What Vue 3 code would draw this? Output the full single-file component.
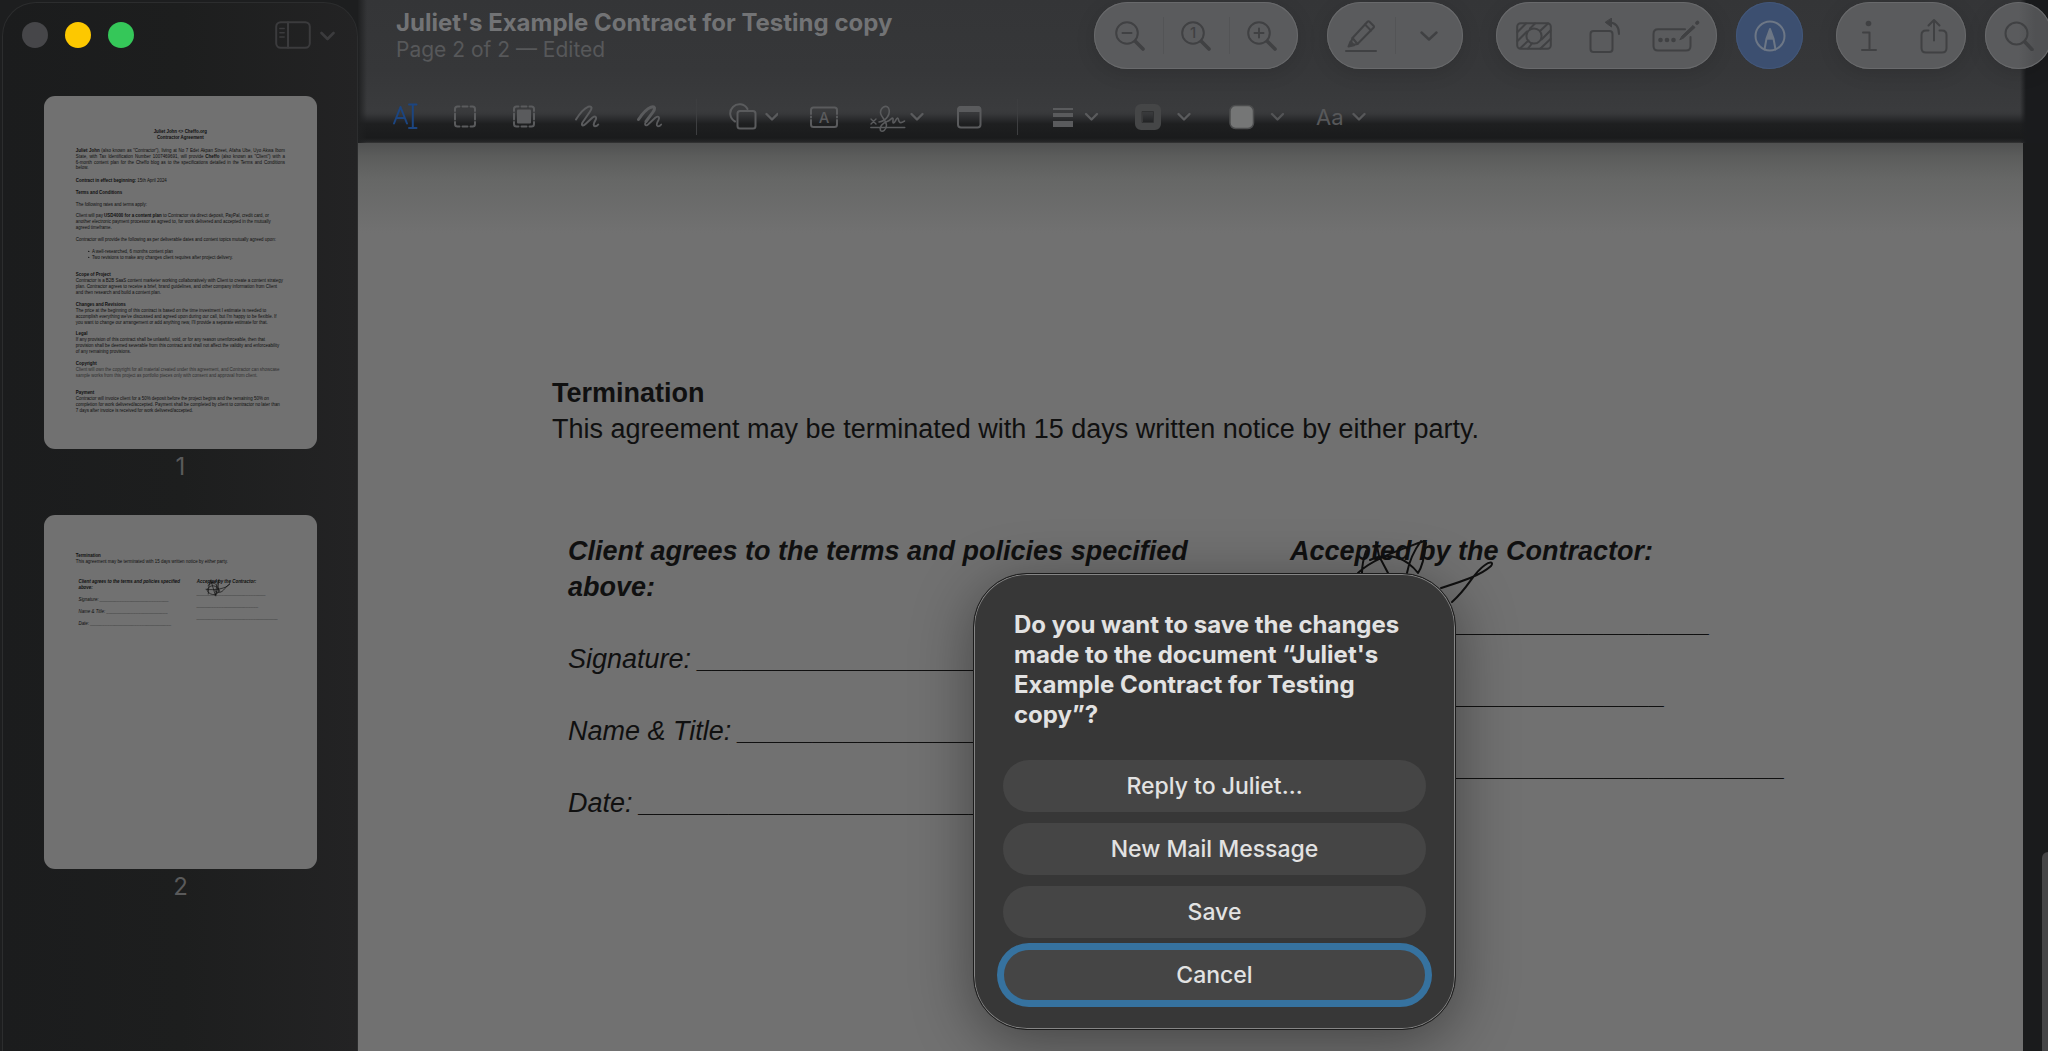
<script setup>
import { ref } from 'vue';

const docName = "Juliet's Example Contract for Testing copy";
const actions = ['Reply to Juliet…', 'New Mail Message', 'Save', 'Cancel'];
const focused = ref('Cancel');

function blank(count) {
  return '_'.repeat(count);
}
</script>

<template>
  <div class="window">
    <aside class="sidebar">
      <div class="sidebar-top">
        <div class="lights">
          <button class="light close" aria-label="Close"></button>
          <button class="light minimize" aria-label="Minimize"></button>
          <button class="light zoom" aria-label="Zoom"></button>
        </div>
        <button class="icon-button" aria-label="Sidebar view">
          <svg width="60" height="28" viewBox="0 0 60 28" class="line">
            <rect x="1.2" y="1.2" width="33.6" height="25.6" rx="4.5" />
            <path d="M13 1.2v25.6" />
            <path d="M4.800 7.500h4.400M4.800 11.800h4.400M4.800 16h4.400" stroke-width="1.400" />
            <path d="M46.500 12l6 6 6-6" stroke-width="2.600" />
          </svg>
        </button>
      </div>

      <figure class="thumb">
        <svg class="thumb-page" viewBox="0 0 1665 2155">
          <foreignObject width="1665" height="2155">
            <div class="sheet first">
              <h1>Juliet John &lt;&gt; Cheffo.org<br />Contractor Agreement</h1>
              <p class="justify">
                <b>Juliet John</b> (also known as "Contractor"), living at No 7 Edet Akpan Street, Afaha Ube, Uyo Akwa Ibom<br />
                State, with Tax Identification Number 1007469691, will provide <b>Cheffo</b> (also known as "Client") with a<br />
                6-month content plan for the Cheffo blog as to the specifications detailed in the Terms and Conditions<br />
                below.
              </p>
              <p><b>Contract in effect beginning:</b> 15th April 2024</p>
              <p><b>Terms and Conditions</b></p>
              <p>The following rates and terms apply:</p>
              <p>
                Client will pay <b>USD4000 for a content plan</b> to Contractor via direct deposit, PayPal, credit card, or<br />
                another electronic payment processor as agreed to, for work delivered and accepted in the mutually<br />
                agreed timeframe.
              </p>
              <p>Contractor will provide the following as per deliverable dates and content topics mutually agreed upon:</p>
              <ul>
                <li>A well-researched, 6 months content plan</li>
                <li>Two revisions to make any changes client requires after project delivery.</li>
              </ul>
              <p>
                <b>Scope of Project</b><br />
                Contractor is a B2B SaaS content marketer working collaboratively with Client to create a content strategy<br />
                plan. Contractor agrees to receive a brief, brand guidelines, and other company information from Client<br />
                and then research and build a content plan.
              </p>
              <p>
                <b>Changes and Revisions</b><br />
                The price at the beginning of this contract is based on the time investment I estimate is needed to<br />
                accomplish everything we've discussed and agreed upon during our call, but I'm happy to be flexible. If<br />
                you want to change our arrangement or add anything new, I'll provide a separate estimate for that.
              </p>
              <p>
                <b>Legal</b><br />
                If any provision of this contract shall be unlawful, void, or for any reason unenforceable, then that<br />
                provision shall be deemed severable from this contract and shall not affect the validity and enforceability<br />
                of any remaining provisions.
              </p>
              <p class="pale">
                <b>Copyright</b><br />
                Client will own the copyright for all material created under this agreement, and Contractor can showcase<br />
                sample works from this project as portfolio pieces only with consent and approval from client.
              </p>
              <p class="last">
                <b>Payment</b><br />
                Contractor will invoice client for a 50% deposit before the project begins and the remaining 50% on<br />
                completion for work delivered/accepted. Payment shall be completed by client to contractor no later than<br />
                7 days after invoice is received for work delivered/accepted.
              </p>
            </div>
          </foreignObject>
        </svg>
        <figcaption>1</figcaption>
      </figure>

      <figure class="thumb">
        <svg class="thumb-page" viewBox="0 0 1665 2155">
          <foreignObject width="1665" height="2155">
            <div class="sheet">
              <h2>Termination</h2>
              <p>This agreement may be terminated with 15 days written notice by either party.</p>
              <div class="signoff">
                <div class="party">
                  <h3>Client agrees to the terms and policies specified above:</h3>
                  <p>Signature: {{ blank(28) }}</p>
                  <p>Name &amp; Title: {{ blank(25) }}</p>
                  <p>Date: {{ blank(33) }}</p>
                </div>
                <div class="party">
                  <h3>Accepted by the Contractor:</h3>
                  <p>{{ blank(28) }}</p>
                  <p>{{ blank(25) }}</p>
                  <p>{{ blank(33) }}</p>
                  <svg class="scribble heavy" viewBox="0 0 160 110">
                    <path d="M18 43C34 28 52 22 82 13M20 95C22 50 24 34 36 12L62 100M38 26c28 2 50 22 44 56C70 110 20 100 12 70C30 30 80 40 90 80M66 108C68 50 72 30 84 12c-2 40-10 70-22 92M6 66C60 74 130 62 152 34C150 28 140 40 112 72C92 92 70 88 60 74" />
                  </svg>
                </div>
              </div>
            </div>
          </foreignObject>
        </svg>
        <figcaption>2</figcaption>
      </figure>
    </aside>

    <main class="viewer">
      <header class="toolbar">
        <div class="toolbar-top">
          <div class="titles">
            <h1>{{ docName }}</h1>
            <p>Page 2 of 2 — Edited</p>
          </div>

          <div class="pill zooms">
            <button aria-label="Zoom out">
              <svg width="30" height="30" viewBox="0 0 30 30" class="line">
                <circle cx="12" cy="12" r="10.800" />
                <path d="M7.500 12h9" />
                <path d="M20.500 20.500l7.500 7.500" stroke-width="3.600" />
              </svg>
            </button>
            <button aria-label="Actual size">
              <svg width="30" height="30" viewBox="0 0 30 30" class="line">
                <circle cx="12" cy="12" r="10.800" />
                <text x="12" y="17" text-anchor="middle" class="glyph">1</text>
                <path d="M20.500 20.500l7.500 7.500" stroke-width="3.600" />
              </svg>
            </button>
            <button aria-label="Zoom in">
              <svg width="30" height="30" viewBox="0 0 30 30" class="line">
                <circle cx="12" cy="12" r="10.800" />
                <path d="M7.500 12h9M12 7.500v9" />
                <path d="M20.500 20.500l7.500 7.500" stroke-width="3.600" />
              </svg>
            </button>
          </div>

          <div class="pill highlight">
            <button aria-label="Highlight">
              <svg width="32" height="32" viewBox="0 0 32 32" class="line">
                <path d="M1 31h30" />
                <path d="M5 25.500l2.500-7.500L22.500 1.800q1-1 2 0l4 4q1 1 0 2L12.500 24z" />
                <path d="M20 4.500l6 6M7.500 18l5 6" />
                <path d="M3.500 26.500l2-5 3.500 3.800z" fill="currentColor" />
              </svg>
            </button>
            <button aria-label="Highlight colour">
              <svg width="18" height="10" viewBox="0 0 18 10" class="line">
                <path d="M1.500 1.500l7.500 7 7.500-7" stroke-width="2.400" />
              </svg>
            </button>
          </div>

          <div class="pill edits">
            <button aria-label="Image background">
              <svg width="36" height="28" viewBox="0 0 36 28" class="line">
                <rect x="1.200" y="1.200" width="33.600" height="25.600" rx="3.500" />
                <circle cx="18" cy="14" r="7.600" />
                <path d="M1.500 10L10 1.500M1.500 19L11 9.500M4.500 26l8-7.500M14 6.500L19 1.500M12 26.500l4-5M24 9l8-7.500M25.500 17.500L34.500 8.500M24.500 26.500l10-9.500" />
              </svg>
            </button>
            <button aria-label="Rotate left">
              <svg width="32" height="36" viewBox="0 0 32 36" class="line">
                <rect x="1.500" y="13" width="22" height="21" rx="3" />
                <path d="M20 4.500c6 0 10 3.500 10 11.500" />
                <path d="M22.500.5v8.500L16.500 4.500z" fill="currentColor" stroke-width="1" />
              </svg>
            </button>
            <button aria-label="Fill form">
              <svg width="48" height="32" viewBox="0 0 48 32" class="line">
                <path d="M33 9.200H6Q1.500 9.200 1.500 14V26Q1.500 30.500 6 30.500H34Q38.500 30.500 38.500 26V17" />
                <g fill="currentColor" stroke="none">
                  <circle cx="8.500" cy="20" r="2.300" />
                  <circle cx="15" cy="20" r="2.300" />
                  <circle cx="21.500" cy="20" r="2.300" />
                </g>
                <path d="M28 19.500L30 16 41 5.500 43 7.500 31.500 18z" fill="currentColor" stroke-width="1" />
                <path d="M45 3l.5-.5" stroke-width="3.600" />
              </svg>
            </button>
          </div>

          <div class="pill markup">
            <button aria-label="Markup">
              <svg width="32" height="32" viewBox="0 0 32 32" class="line">
                <circle cx="16" cy="16" r="14.500" />
                <path d="M10.500 29.500l2-11L16 9l3.500 9.500 2 11M12.500 18.500h7" stroke-width="2" />
                <path d="M13 18.500L16 9l3 9.500z" fill="currentColor" stroke-width="1" />
              </svg>
            </button>
          </div>

          <div class="pill share">
            <button aria-label="Info">
              <svg width="18" height="32" viewBox="0 0 18 32" class="line">
                <circle cx="8.500" cy="3.500" r="2.800" fill="currentColor" stroke="none" />
                <path d="M3 12.500h6.500v17.500M2 30h14" />
              </svg>
            </button>
            <button aria-label="Share">
              <svg width="28" height="36" viewBox="0 0 28 36" class="line">
                <path d="M8.500 12.500H6Q1.500 12.500 1.500 17V30Q1.500 34.500 6 34.500H22Q26.500 34.500 26.500 30V17Q26.500 12.500 22 12.500H19.500" />
                <path d="M14 22.500V2M8.500 7.500L14 2l5.500 5.500" />
              </svg>
            </button>
          </div>

          <div class="pill search">
            <button aria-label="Search">
              <svg width="30" height="30" viewBox="0 0 30 30" class="line">
                <circle cx="12.500" cy="12.500" r="11" />
                <path d="M21 21l7 7.500" stroke-width="3.600" />
              </svg>
            </button>
          </div>
        </div>

        <div class="tools">
          <button class="active" aria-label="Text selection">
            <svg width="29" height="36" viewBox="0 0 29 36" class="line">
              <path d="M1 24.500L7.500 8 14 24.500M3.500 19h8" />
              <path d="M16 5.500h7.500M19.800 5.500v23.500M16 29h7.500" />
            </svg>
          </button>
          <button aria-label="Rectangular selection">
            <svg width="27" height="36" viewBox="0 0 27 36" class="line">
              <path d="M1 12V10Q1 7.500 3.500 7.500H5.500M8.500 7.500h5M16.500 7.500h2Q21 7.500 21 10v2M21 14.500v6M21 23v2Q21 27.500 18.500 27.500h-2M13.500 27.500h-5M5.500 27.500h-2Q1 27.500 1 25v-2M1 20.500v-6" />
            </svg>
          </button>
          <button aria-label="Invert selection">
            <svg width="30" height="36" viewBox="0 0 30 36" class="line">
              <path d="M1 12V10Q1 7.500 3.500 7.500H5.500M8.500 7.500h5M16.500 7.500h2Q21 7.500 21 10v2M21 14.500v6M21 23v2Q21 27.500 18.500 27.500h-2M13.500 27.500h-5M5.500 27.500h-2Q1 27.500 1 25v-2M1 20.500v-6" />
              <rect x="4" y="10.500" width="14" height="14" rx="1" fill="currentColor" stroke="none" />
            </svg>
          </button>
          <button aria-label="Sketch">
            <svg width="30" height="36" viewBox="0 0 30 36" class="line">
              <path d="M1 20.500C5 14 9 9.500 13 7.800C17 6.500 17.500 9 15 12.500L7.500 23.500C6 26.500 8 27.500 10.500 25L17.500 18.500C20.500 16.500 22 18 20.500 21C18.500 24.500 18 27 20 27.300C21.500 27.300 22.500 26.500 23.200 25.500" />
            </svg>
          </button>
          <button aria-label="Draw">
            <svg width="27" height="36" viewBox="0 0 27 36" class="line">
              <path d="M1.500 20.500C5.500 14.500 10 9.800 14 8.200C18 7 18.500 9.500 16 13L9 22.500" stroke-width="3" />
              <path d="M9 22.500C7 26 8.500 27.500 11 25.500L18.500 18.500C21.500 16.500 23 18 21.500 21C19.500 24.500 19 27 21 27.300C22.500 27.300 23.500 26.500 24.200 25.500" stroke-width="1.800" />
            </svg>
          </button>
          <span class="divider"></span>
          <button aria-label="Shapes">
            <svg width="49" height="36" viewBox="0 0 49 36" class="line">
              <path d="M6 22.500A9.200 9.200 0 1 1 18.500 10" />
              <rect x="8.500" y="12" width="18" height="17.500" rx="2.500" />
              <path d="M37.500 15l5.500 5.500 5.500-5.500" stroke-width="2.400" />
            </svg>
          </button>
          <button aria-label="Text">
            <svg width="28" height="36" viewBox="0 0 28 36" class="line">
              <path d="M1 15V11Q1 8.500 3.500 8.500H24.500Q27 8.500 27 11V15M27 21V25.500Q27 28 24.500 28H3.500Q1 28 1 25.500V21M1 17.500v1M27 17.500v1" />
              <text x="14" y="23.500" text-anchor="middle" class="glyph">A</text>
            </svg>
          </button>
          <button aria-label="Sign">
            <svg width="55" height="36" viewBox="0 0 55 36" class="line">
              <path d="M1 20l5 5M6 20l-5 5M.8 28.500h34" stroke-width="1.400" />
              <path d="M9 23C17 22 21 14 18.500 9C16 5.500 10.500 8 10.500 14C11 18 16 21 16.500 26C16.500 31 12.500 33.500 10.500 31.500C9 28 12.500 24 17 22.500C20 21.500 21.500 19 22.500 19C24 19 22 24 23.500 24C25.500 23.500 26 19 27.500 19C29 19.500 28 22.500 30 23.500C32 24 33 23 34.500 22" stroke-width="1.600" />
              <path d="M41.500 15l5.500 5.500 5.500-5.500" stroke-width="2.400" />
            </svg>
          </button>
          <button aria-label="Note">
            <svg width="28" height="36" viewBox="0 0 28 36" class="line">
              <rect x="1" y="8" width="22.500" height="20.500" rx="3" />
              <path d="M1.500 12V10.500Q1.500 8 4 8H20.500Q23 8 23 10.500V12z" fill="currentColor" />
            </svg>
          </button>
          <span class="divider wide"></span>
          <button aria-label="Line style">
            <svg width="50" height="36" viewBox="0 0 50 36" class="line">
              <g fill="currentColor" stroke="none">
                <rect y="9" width="20" height="2" />
                <rect y="14" width="20" height="4" />
                <rect y="22" width="20" height="6" />
              </g>
              <path d="M33 15l5.500 5.500 5.500-5.500" stroke-width="2.400" />
            </svg>
          </button>
          <button aria-label="Border colour">
            <svg width="62" height="36" viewBox="0 0 62 36" class="line">
              <rect x="4" y="9" width="18" height="18" rx="2" stroke="#454647" stroke-width="8" />
              <rect x="7.500" y="12.500" width="11" height="11" stroke="#303132" stroke-width="1" />
              <path d="M43.500 15l5.500 5.500 5.500-5.500" stroke-width="2.400" />
            </svg>
          </button>
          <button aria-label="Fill colour">
            <svg width="55" height="36" viewBox="0 0 55 36" class="line">
              <rect x="1" y="6.500" width="23.500" height="23" rx="5.500" fill="#757676" stroke="#4c4d4e" stroke-width="1.500" />
              <path d="M43 15l5.500 5.500 5.500-5.500" stroke="#535456" stroke-width="2.400" />
            </svg>
          </button>
          <button class="fonts" aria-label="Text style">
            Aa
            <svg width="14" height="36" viewBox="0 0 14 36" class="line">
              <path d="M1.500 15l5.500 5.500 5.500-5.500" stroke-width="2.400" />
            </svg>
          </button>
        </div>
      </header>

      <div class="document">
        <article class="sheet">
          <h2>Termination</h2>
          <p>This agreement may be terminated with 15 days written notice by either party.</p>
          <div class="signoff">
            <div class="party">
              <h3>Client agrees to the terms and policies specified above:</h3>
              <p>Signature: {{ blank(28) }}</p>
              <p>Name &amp; Title: {{ blank(25) }}</p>
              <p>Date: {{ blank(33) }}</p>
            </div>
            <div class="party">
              <h3>Accepted by the Contractor:</h3>
              <p>{{ blank(28) }}</p>
              <p>{{ blank(25) }}</p>
              <p>{{ blank(33) }}</p>
              <svg class="scribble" viewBox="0 0 160 110">
                <path d="M18 43C32 29 60 20 84 11M22 43C22 34 24 27 26 21M36 12L39 26L48 43M30 30C50 20 68 30 78 43M67 43C69 32 73 22 81 11M78 43C84 34 85 22 86 13" />
                <path d="M101 58C120 52 140 46 151 36C154 32 150 31 145 35C132 44 130 56 112 72" />
              </svg>
            </div>
          </div>
        </article>
        <div class="track"></div>
      </div>
    </main>

    <div class="dialog" role="alertdialog" aria-labelledby="save-question">
      <h2 id="save-question">Do you want to save the changes made to the document “{{ docName }}”?</h2>
      <button
        v-for="action in actions"
        :key="action"
        :class="{ focused: focused === action }"
        @click="focused = action"
      >
        {{ action }}
      </button>
    </div>
  </div>
</template>

<style>
body {
  margin: 0;
  background: #1b1c1d;
}
</style>

<style scoped>
.window {
  position: relative;
  display: grid;
  grid-template-columns: 358px 1fr;
  height: 100vh;
  overflow: hidden;
  background: #1d1e1f;
  font-family: Inter, "Liberation Sans", sans-serif;
}

h1,
h2,
h3,
p,
ul,
figure {
  margin: 0;
  padding: 0;
}

button {
  padding: 0;
  border: none;
  background: none;
  color: inherit;
  font: inherit;
}

svg {
  display: block;
}

.line {
  fill: none;
  stroke: currentColor;
  stroke-width: 2;
  stroke-linecap: round;
  stroke-linejoin: round;
}

.glyph {
  fill: currentColor;
  stroke: none;
  font-size: 15px;
  font-weight: 500;
}

/* sidebar */
.sidebar {
  box-sizing: border-box;
  margin: 2px 0 0 2px;
  padding: 0 22px 0 19px;
  border: 1px solid #2c2d2e;
  border-bottom: none;
  border-radius: 34px 34px 0 0;
  background: linear-gradient(90deg, #1b1c1d, #1d1e1e 50%, #232324);
}

.sidebar-top {
  display: flex;
  align-items: center;
  justify-content: space-between;
  height: 64px;
  margin-bottom: 29px;
}

.lights {
  display: flex;
  gap: 17px;
}

.light {
  width: 26px;
  height: 26px;
  border-radius: 50%;
}

.close {
  background: #464649;
}

.minimize {
  background: #fdc800;
}

.zoom {
  background: #35c759;
}

.icon-button {
  color: #3b3b3d;
}

.thumb {
  width: 273px;
  margin: 0 auto 30px 22px;
}

.thumb-page {
  width: 100%;
  border-radius: 11px;
  background: #717171;
}

.thumb figcaption {
  height: 36px;
  color: #5a5a5b;
  font-size: 24px;
  line-height: 36px;
  text-align: center;
}

/* toolbar */
.toolbar {
  box-sizing: border-box;
  height: 143px;
  padding: 2px 0 0 35px;
  background:
    linear-gradient(90deg, #1f2021, transparent 9px),
    linear-gradient(270deg, #1a1b1d 22px, transparent 28px),
    linear-gradient(#343537, #363739 70px, #3a3b3d 110px, #37383a 114px, #1e1f20 124px, #1a1b1c 138px, #262728 142px, #3c3c3c);
}

.toolbar-top {
  display: flex;
  height: 67px;
  margin: 0 -4px 30px 3px;
}

.titles {
  flex: 1;
  padding-top: 7px;
}

.titles h1 {
  color: #727375;
  font-size: 24px;
  line-height: 28px;
}

.titles p {
  color: #57585a;
  font-size: 21px;
  line-height: 26px;
}

.pill {
  box-sizing: border-box;
  display: flex;
  flex: none;
  height: 67px;
  border-radius: 34px;
  background: #5a5b5d;
  box-shadow: inset 0 0 0 1px #68696b, 0 4px 20px rgba(0, 0, 0, 0.12);
  color: #404143;
}

.pill button {
  display: flex;
  flex: 1;
  align-items: center;
  justify-content: center;
  position: relative;
}

.zooms button + button::before,
.highlight button + button::before {
  content: "";
  position: absolute;
  left: 0;
  top: 15px;
  bottom: 15px;
  width: 1px;
  background: #535456;
}

.zooms {
  width: 204px;
  margin-right: 29px;
  padding: 0 3px;
}

.highlight {
  width: 136px;
  margin-right: 33px;
}

.edits {
  width: 221px;
  margin-right: 19px;
  padding: 0 6px 0 2px;
}

.markup {
  width: 67px;
  margin-right: 33px;
  background: #3c4f70;
  box-shadow: inset 0 0 0 1px #435779;
  color: #6d7786;
}

.share {
  width: 130px;
  margin-right: 19px;
}

.search {
  width: 67px;
  background: linear-gradient(90deg, #5a5b5d 50%, #505153 75%);
}

.tools {
  display: flex;
  gap: 32px;
  height: 36px;
  color: #5a5b5d;
}

.tools .active {
  color: #1c4580;
}

.divider {
  width: 1px;
  background: #3d3e40;
}

.wide {
  margin-right: 3px;
}

.fonts {
  display: flex;
  gap: 8px;
  align-items: center;
  color: #57585a;
  font-size: 22px;
}

/* document */
.viewer {
  display: flex;
  flex-direction: column;
  min-width: 0;
}

.document {
  display: grid;
  grid-template-columns: 1fr 19px 6px;
  flex: 1;
  background: #1a1b1c;
}

.document > .sheet {
  background: linear-gradient(#505151, #5c5d5c 14px, #666766 36px, #717171 90px);
}

.track {
  grid-column: 3;
  margin-top: 709px;
  border-radius: 8px 0 0 0;
  background: #454546;
}

.sheet {
  box-sizing: border-box;
  height: 100%;
  padding: 232px 0 0 194px;
  color: #101010;
  font: 27px/36px "Liberation Sans", Arial, sans-serif;
}

.sheet h1,
.sheet h2,
.sheet h3 {
  font-size: 27px;
  line-height: 36px;
}

.signoff {
  display: grid;
  grid-template-columns: 722px 1fr;
  padding: 86px 0 0 16px;
  font-style: italic;
}

.party {
  position: relative;
}

.party h3 {
  max-width: 660px;
}

.party p {
  margin-top: 36px;
}

.scribble {
  position: absolute;
  top: -3px;
  left: 50px;
  width: 160px;
  fill: none;
  stroke: #101010;
  stroke-width: 2;
  stroke-linecap: round;
}

.heavy {
  stroke-width: 4;
}

.first {
  padding: 199px 196px 0 194px;
}

.first h1 {
  margin-bottom: 42px;
  text-align: center;
}

.first p {
  margin-bottom: 36px;
  white-space: nowrap;
}

.first .justify {
  margin-bottom: 40px;
  text-align: justify;
  text-align-last: justify;
  white-space: normal;
}

.first ul {
  margin-bottom: 72px;
  padding-left: 98px;
}

.first .pale {
  margin-bottom: 72px;
  color: #303030;
}

.pale b {
  color: #101010;
}

.first .last {
  margin-bottom: 0;
}

/* save dialog */
.dialog {
  position: absolute;
  top: 573px;
  left: calc(50% - 51px);
  box-sizing: border-box;
  display: flex;
  flex-direction: column;
  gap: 11px;
  width: 483px;
  padding: 36px 29px 28px;
  border: 1px solid #1c1c1c;
  border-radius: 54px;
  background: #373737;
  box-shadow: inset 0 0 0 1px #858585, 0 12px 60px rgba(0, 0, 0, 0.4);
  color: #e2e2e2;
}

.dialog h2 {
  margin: 0 11px 19px;
  font-size: 24px;
  line-height: 30px;
}

.dialog button {
  height: 52px;
  border-radius: 26px;
  background: #454545;
  font-size: 23px;
  font-weight: 500;
}

.dialog .focused {
  outline: 7px solid #36729f;
  outline-offset: -1px;
}
</style>
